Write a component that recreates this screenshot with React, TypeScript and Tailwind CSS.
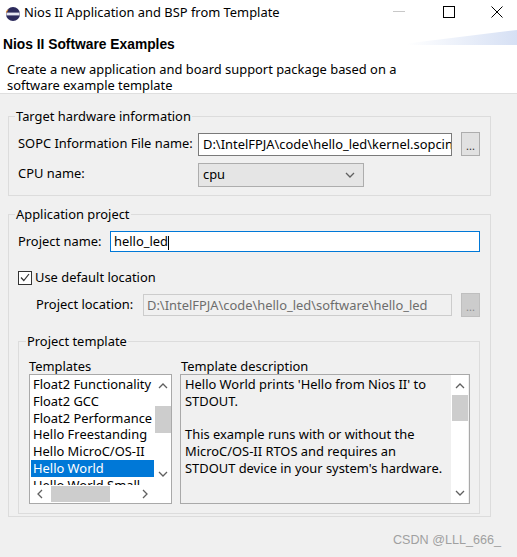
import React from 'react';

const font = "font-['Noto_Sans',sans-serif]";

const Chevron = ({ dir, className = '' }: { dir: 'up' | 'down' | 'left' | 'right'; className?: string }) => {
  const pts = {
    up: '1,6 5,2 9,6',
    down: '1,2 5,6 9,2',
    left: '6,1 2,5 6,9',
    right: '2,1 6,5 2,9',
  }[dir];
  const vertical = dir === 'up' || dir === 'down';
  return (
    <svg
      width={vertical ? 10 : 8}
      height={vertical ? 8 : 10}
      viewBox={vertical ? '0 0 10 8' : '0 0 8 10'}
      className={className}
    >
      <polyline points={pts} fill="none" stroke="#606060" strokeWidth="1.3" />
    </svg>
  );
};

const EclipseIcon = () => (
  <svg width="16" height="16" viewBox="0 0 16 16">
    <circle cx="8" cy="8" r="7" fill="#2c2a5c" />
    <path d="M1.4 6.6 H14.6 V9.4 H1.4 Z" fill="#e6e6f2" />
    <path d="M1.4 6.6 A7 7 0 0 1 3 3.6" stroke="#f7941e" strokeWidth="1" fill="none" />
  </svg>
);

const TitleBar = () => (
  <div className="h-[29px] bg-white flex items-center">
    <div className="ml-[5px] mt-[-2px]">
      <EclipseIcon />
    </div>
    <span className="ml-[3px] mt-[-4px] leading-[17px] text-black">
      Nios II Application and BSP from Template
    </span>
    <div className="ml-auto flex h-full">
      <div className="w-[44px] flex items-center justify-center pb-[6px]">
        <div className="w-[12px] h-[1px] bg-[#c8c8c8]" />
      </div>
      <div className="w-[56px] flex items-center justify-center pb-[6px]">
        <div className="w-[12px] h-[12px] border border-black" />
      </div>
      <div className="w-[40px] flex items-center justify-center pb-[6px]">
        <svg width="12" height="12" viewBox="0 0 12 12">
          <path d="M0.5 0.5 L11.5 11.5 M11.5 0.5 L0.5 11.5" stroke="#000" strokeWidth="1" />
        </svg>
      </div>
    </div>
  </div>
);

const Header = () => (
  <div className="relative h-[65px] bg-white border-b border-[#dfdfdf]">
    <div className="absolute right-0 top-[1px] w-[110px] h-[15px] bg-linear-to-r from-white to-[#d6e0f4] [clip-path:polygon(0_90%,100%_0,100%_100%,0_100%)]" />
    <div className="relative pt-[7px] pl-[3px] text-[13.8px] leading-[17px] font-bold font-['Liberation_Sans',sans-serif] text-black">
      Nios II Software Examples
    </div>
    <div className="relative mt-[8px] pl-[7px] leading-[16px] text-black">
      Create a new application and board support package based on a
      <br />
      software example template
    </div>
  </div>
);

const TemplatesList = () => {
  const items = [
    'Float2 Functionality',
    'Float2 GCC',
    'Float2 Performance',
    'Hello Freestanding',
    'Hello MicroC/OS-II',
    'Hello World',
    'Hello World Small',
  ];
  return (
    <div className="w-[143px] h-[130px] border border-[#a9a9a9] bg-white flex flex-col">
      <div className="flex h-[110px]">
        <div className="flex-1 overflow-hidden pt-[1.4px] pl-[1px]">
          {items.map((it) => (
            <div
              key={it}
              className={`h-[16.7px] leading-[16.7px] px-[2px] whitespace-nowrap ${
                it === 'Hello World' ? 'bg-[#0078d7] text-white' : 'text-black'
              }`}
            >
              {it}
            </div>
          ))}
        </div>
        <div className="w-[17px] flex flex-col items-center">
          <Chevron dir="up" className="mt-[7px]" />
          <div className="w-[16px] h-[27px] bg-[#cdcdcd] mt-[16px]" />
          <div className="flex-1" />
          <Chevron dir="down" className="mb-[7px]" />
        </div>
      </div>
      <div className="flex h-[17px] items-center">
        <Chevron dir="left" className="ml-[6px]" />
        <div className="ml-[7px] w-[59px] h-[16px] bg-[#cdcdcd]" />
        <div className="flex-1" />
        <Chevron dir="right" className="mr-[22px]" />
      </div>
    </div>
  );
};

const DescriptionBox = () => (
  <div className="w-[290px] h-[130px] border border-[#a9a9a9] bg-[#f0f0f0] flex">
    <div className="flex-1 pt-[1.4px] pl-[4px] leading-[16.7px] text-black whitespace-nowrap">
      <div>Hello World prints 'Hello from Nios II' to</div>
      <div>STDOUT.</div>
      <div className="h-[16.7px]" />
      <div>This example runs with or without the</div>
      <div>MicroC/OS-II RTOS and requires an</div>
      <div>STDOUT device in your system's hardware.</div>
    </div>
    <div className="w-[17px] mr-[1px] bg-white flex flex-col items-center">
      <Chevron dir="up" className="mt-[7px]" />
      <div className="w-[16px] h-[26px] bg-[#cdcdcd] mt-[5px]" />
      <div className="flex-1" />
      <Chevron dir="down" className="mb-[6px]" />
    </div>
  </div>
);

const BrowseButton = ({ disabled = false }: { disabled?: boolean }) => (
  <div
    className={`w-[19px] h-[24px] border flex items-center justify-center text-[11px] leading-none ${
      disabled ? 'bg-[#cccccc] border-[#bfbfbf] text-[#8a8a8a]' : 'bg-[#e1e1e1] border-[#adadad] text-[#333]'
    }`}
  >
    <span className="mt-[2px]">...</span>
  </div>
);

export default function App() {
  return (
    <div className={`relative w-[517px] h-[557px] overflow-hidden bg-[#f0f0f0] text-[12.9px] ${font}`}>
      <TitleBar />
      <Header />

      <fieldset className="mt-[14px] ml-[8px] w-[483px] border border-[#dcdcdc] px-[6px] pb-[8px]">
        <legend className="px-[1px] leading-[17px] text-black">Target hardware information</legend>
        <div className="pt-[7px] pl-[3px] flex flex-col gap-[7px]">
          <div className="flex items-center">
            <span className="w-[180px]">SOPC Information File name:</span>
            <div className="w-[254px] h-[23px] bg-white border border-[#7a7a7a] pl-[4px] leading-[21px] whitespace-nowrap overflow-hidden">
              D:\IntelFPJA\code\hello_led\kernel.sopcinfo
            </div>
            <div className="ml-[9px]">
              <BrowseButton />
            </div>
          </div>
          <div className="flex items-center">
            <span className="w-[180px] mt-[-2px]">CPU name:</span>
            <div className="w-[166px] h-[24px] bg-[#e5e5e5] border border-[#adadad] pl-[4px] pr-[8px] flex items-center justify-between">
              <span>cpu</span>
              <Chevron dir="down" />
            </div>
          </div>
        </div>
      </fieldset>

      <fieldset className="mt-[10px] ml-[8px] w-[483px] h-[311px] border border-[#dcdcdc] px-[6px]">
        <legend className="px-[1px] leading-[17px] text-black">Application project</legend>
        <div className="pt-[8px] pl-[3px] flex items-center">
          <span className="w-[92px]">Project name:</span>
          <div className="w-[370px] h-[21px] bg-white border border-[#0078d7] pl-[3px] leading-[19px]">
            hello_led<span className="inline-block w-[1px] h-[14px] bg-black align-middle" />
          </div>
        </div>
        <div className="mt-[17px] pl-[3px] flex items-center h-[17px]">
          <div className="w-[14px] h-[14px] border border-[#333] bg-white flex items-center justify-center">
            <svg width="10" height="9" viewBox="0 0 10 9">
              <polyline points="1,4.5 3.8,7.5 9,1" fill="none" stroke="#333" strokeWidth="1.2" />
            </svg>
          </div>
          <span className="ml-[3px]">Use default location</span>
        </div>
        <div className="mt-[7px] pl-[21px] flex items-center">
          <span className="w-[107px]">Project location:</span>
          <div className="w-[309px] h-[22px] bg-[#f0f0f0] border border-[#cccccc] pl-[3px] leading-[20px] text-[#6d6d6d] whitespace-nowrap overflow-hidden">
            D:\IntelFPJA\code\hello_led\software\hello_led
          </div>
          <div className="ml-[9px]">
            <BrowseButton disabled />
          </div>
        </div>

        <fieldset className="mt-[16px] ml-[3px] w-[462px] border border-[#dcdcdc] px-[7px] pb-[9px]">
          <legend className="px-[1px] leading-[17px] text-black">Project template</legend>
          <div className="pl-[3px] flex gap-[8px]">
            <div className="flex flex-col">
              <div className="mt-[9px] h-[15px] leading-[15px]">Templates</div>
              <TemplatesList />
            </div>
            <div className="flex flex-col">
              <div className="mt-[9px] h-[15px] leading-[15px] pl-[1px]">Template description</div>
              <DescriptionBox />
            </div>
          </div>
        </fieldset>
      </fieldset>

      <div className="absolute left-[393px] top-[532px] text-[12.6px] leading-[17px] text-[#a0a0a0] font-['Liberation_Sans',sans-serif]">
        CSDN @LLL_666_
      </div>
    </div>
  );
}
